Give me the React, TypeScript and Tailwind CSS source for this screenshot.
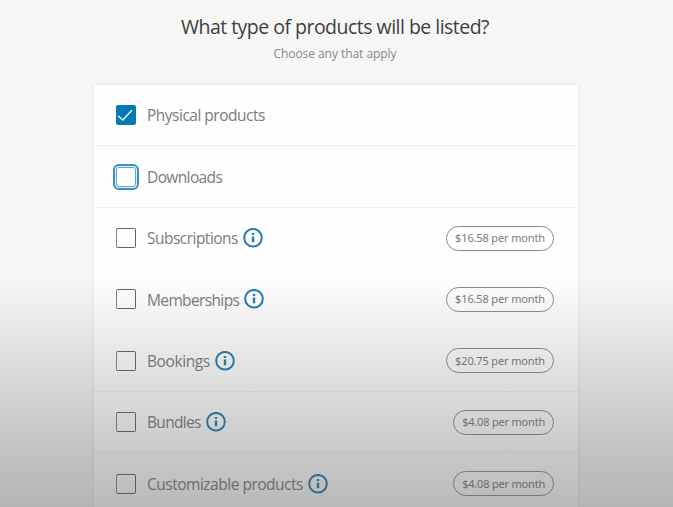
type Product = { name: string; price?: string; checked?: boolean; focused?: boolean; tracking: string; priceTracking?: string; height: string };

const products: Product[] = [
  { name: 'Physical products', checked: true, tracking: 'pt-[2px] tracking-[-0.5px]', height: 'h-[61px] border-[#f1f1f1]' },
  { name: 'Downloads', focused: true, tracking: 'pt-[2px] tracking-[-0.62px]', height: 'h-[62px] border-[#f1f1f1]' },
  { name: 'Subscriptions', price: '$16.58 per month', tracking: 'pt-[2px] tracking-[-0.52px]', priceTracking: 'tracking-[-0.14px]', height: 'h-[61px] border-[#fbfbfb]' },
  { name: 'Memberships', price: '$16.58 per month', tracking: 'pt-[3px] tracking-[-0.63px]', priceTracking: 'tracking-[-0.14px]', height: 'h-[61px] border-[#f6f6f6]' },
  { name: 'Bookings', price: '$20.75 per month', tracking: 'pt-[2px] tracking-[-0.4px]', priceTracking: 'tracking-[-0.14px]', height: 'h-[62px] border-[#f1f1f1]' },
  { name: 'Bundles', price: '$4.08 per month', tracking: 'pt-[2px] tracking-[-0.68px]', priceTracking: 'tracking-[-0.2px]', height: 'h-[61px] border-[#f4f4f4]' },
  { name: 'Customizable products', price: '$4.08 per month', tracking: 'pt-[2px] tracking-[-0.49px]', priceTracking: 'tracking-[-0.2px]', height: 'h-[62px] border-[#f1f1f1]' },
];

function Checkbox({ checked, focused }: { checked?: boolean; focused?: boolean }) {
  if (checked) {
    return (
      <span className="flex size-5 shrink-0 items-center justify-center rounded-[2px] bg-[#0678b2]">
        <svg viewBox="0 0 20 20" className="size-5" fill="none" stroke="#e6f7ff" strokeWidth="1.5">
          <path d="M2 10.7 6.7 15 16 5.3" />
        </svg>
      </span>
    );
  }
  if (focused) {
    return (
      <span className="-mx-[3px] flex size-[26px] shrink-0 items-center justify-center rounded-[6px] border-2 border-[#3e8fc0] bg-[#d8f3ff]">
        <span className="size-5 rounded-[3px] border border-[#5fa6ce] bg-white" />
      </span>
    );
  }
  return <span className="size-5 shrink-0 rounded-[2px] border border-[#626262] border-l-[#858585]" />;
}

function InfoIcon() {
  return (
    <svg viewBox="0 0 20 20" className="ml-[5px] size-5 shrink-0" fill="none" stroke="#257db0">
      <circle cx="10" cy="9.7" r="8.8" strokeWidth="2" />
      <path d="M10 8.4V14.3M10 4.9V7.1" strokeWidth="2.4" />
    </svg>
  );
}

function ProductRow({ product }: { product: Product }) {
  return (
    <li className={`flex shrink-0 items-center border-b pr-[24px] pl-[22px] ${product.height}`}>
      <Checkbox checked={product.checked} focused={product.focused} />
      <span className={`ml-[11px] text-[15.5px] whitespace-nowrap text-[#7c7c7c] ${product.tracking}`}>{product.name}</span>
      {product.price && <InfoIcon />}
      {product.price && (
        <span
          className={`ml-auto flex h-[25px] items-center rounded-full border border-[#8c8c8c] px-2 pt-px font-['Noto_Sans',sans-serif] text-[11px] whitespace-nowrap text-[#7c7c7c] ${product.priceTracking}`}
        >
          {product.price}
        </span>
      )}
    </li>
  );
}

export default function App() {
  return (
    <main className="relative h-[507px] w-[673px] overflow-hidden bg-[#f6f6f5] font-['Open_Sans','Noto_Sans',sans-serif]">
      <header className="flex h-[85px] flex-col items-center pt-[13px] pr-[3px]">
        <h1 className="text-[19.5px] leading-7 tracking-[-0.52px] whitespace-nowrap text-[#3c3f40]">What type of products will be listed?</h1>
        <p className="mt-[3px] text-[12px] leading-5 tracking-[-0.05px] whitespace-nowrap text-[#888888]">Choose any that apply</p>
      </header>
      <ul className="ml-[94px] flex w-[484px] flex-col bg-[#fefefe] shadow-[0_0_3px_rgba(0,0,0,0.12)]">
        {products.map((product) => (
          <ProductRow key={product.name} product={product} />
        ))}
      </ul>
      <div className="pointer-events-none absolute inset-x-0 bottom-0 h-[232px] bg-linear-to-b from-[#505050]/0 to-[#505050]/40" />
    </main>
  );
}
